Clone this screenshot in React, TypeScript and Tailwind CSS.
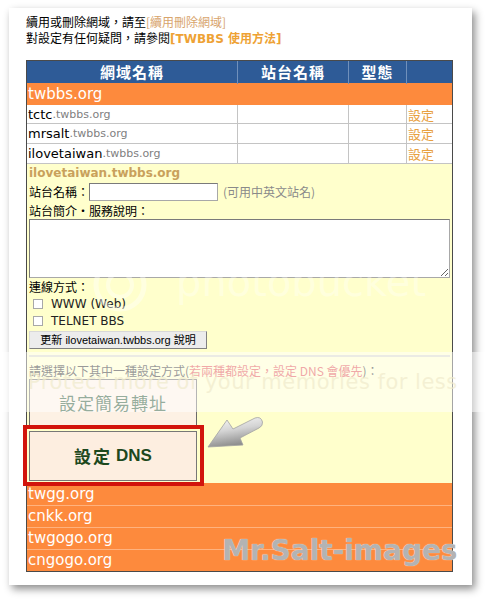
import React from "react";

const cols = "grid grid-cols-[210px_111px_58px_46px]";

const subs = ["tctc", "mrsalt", "ilovetaiwan"];
const others = ["twgg.org", "cnkk.org", "twgogo.org", "cngogo.org"];

function Arrow() {
  return (
    <svg
      className="absolute left-[200px] top-[410px] z-20"
      width="70"
      height="45"
      viewBox="0 0 70 45"
    >
      <defs>
        <linearGradient id="ag" x1="0" y1="0" x2="0.3" y2="1">
          <stop offset="0" stopColor="#fcfcfc" />
          <stop offset="0.5" stopColor="#d4d4d4" />
          <stop offset="1" stopColor="#8c8c8c" />
        </linearGradient>
      </defs>
      <path
        d="M8 37 L27 10 L33 19 L55 8 Q61 6 62.5 12 Q63 16 59 18 L40 28 L43 35 Z"
        fill="url(#ag)"
        stroke="#a2a2a2"
        strokeWidth="0.8"
      />
    </svg>
  );
}

function Check({ label }: { label: string }) {
  return (
    <div className="h-[17px] flex items-center">
      <span className="ml-[4px] mr-[8px] w-[10px] h-[10px] border border-[#a8a8a8] bg-white" />
      <span className="text-[12px] text-[#222] font-['DejaVu_Sans',sans-serif]">{label}</span>
    </div>
  );
}

export default function App() {
  return (
    <div className="relative w-[487px] h-[600px] overflow-hidden bg-white pl-[9px] pt-[8px] font-['DejaVu_Sans','Noto_Sans_CJK_TC',sans-serif]">
      <div className="w-[463px] h-[577px] bg-white shadow-[3px_4px_8px_rgba(0,0,0,0.45)] pl-[17px] pt-[6px]">
        <div className="text-[12px] leading-[16px] text-black font-['Noto_Sans_CJK_TC',sans-serif]">
          <p>
            續用或刪除網域，請至<span className="text-[#d8a46c]">[續用刪除網域]</span>
          </p>
          <p>
            對設定有任何疑問，請參閱
            <span className="font-bold text-[#eea235] font-['DejaVu_Sans','Noto_Sans_CJK_TC',sans-serif]">
              [TWBBS 使用方法]
            </span>
          </p>
        </div>

        <div className="mt-[13px] w-[427px] border border-[#4a4a4a]">
          <div className={`${cols} h-[22px] bg-[#2e5b97] text-white font-bold text-[15px] tracking-[1px] font-['Noto_Sans_CJK_TC',sans-serif]`}>
            <div className="flex items-center justify-center">網域名稱</div>
            <div className="flex items-center justify-center border-l border-[#7090bb]">站台名稱</div>
            <div className="flex items-center justify-center border-l border-[#7090bb]">型態</div>
            <div className="border-l border-[#7090bb]" />
          </div>

          <div className="h-[22px] bg-[#fd8a3d] text-white text-[15px] flex items-center pl-[1px]">
            twbbs.org
          </div>

          {subs.map((s, i) => (
            <div
              key={s}
              className={`${cols} ${i === 0 ? "h-[19px]" : "h-[20px]"} bg-white border-b border-[#c4c4c4]`}
            >
              <div className="flex items-center pl-[1px]">
                <span className="text-[13px] text-black">{s}</span>
                <span className="text-[11px] text-[#808080]">.twbbs.org</span>
              </div>
              <div className="border-l border-[#c4c4c4]" />
              <div className="border-l border-[#c4c4c4]" />
              <div className="border-l border-[#c4c4c4] flex items-center pl-[1px] text-[13px] text-[#e8a040] font-['Noto_Sans_CJK_TC',sans-serif]">
                設定
              </div>
            </div>
          ))}

          <div className="bg-[#ffffcc] px-[2px] pb-[2px] text-[12px] text-black">
            <div className="h-[18px] leading-[18px] font-bold text-[12px] text-[#c9a15c]">
              ilovetaiwan.twbbs.org
            </div>
            <div className="h-[19px] flex items-end font-['Noto_Sans_CJK_TC',sans-serif]">
              <span className="leading-[18px]">站台名稱：</span>
              <input className="w-[129px] h-[18px] border border-[#a8a8a8] border-t-[#7a7a7a] border-l-[#7a7a7a] bg-white" />
              <span className="ml-[5px] leading-[18px] text-[#8a8a8a]">(可用中英文站名)</span>
            </div>
            <div className="mt-[2px] leading-[16px] font-['Noto_Sans_CJK_TC',sans-serif]">
              站台簡介‧服務說明：
            </div>
            <textarea className="block w-[421px] h-[59px] border border-[#a8a8a8] border-t-[#7a7a7a] border-l-[#7a7a7a] bg-white" />
            <div className="mt-[1px] leading-[16px] font-['Noto_Sans_CJK_TC',sans-serif]">連線方式：</div>
            <Check label="WWW (Web)" />
            <Check label="TELNET BBS" />
            <div className="mt-[2px] w-[178px] h-[18px] bg-[#ececec] border border-[#d8d8d8] border-r-[#808080] border-b-[#808080] flex items-center justify-center text-[11px] text-black font-['Liberation_Sans','Noto_Sans_CJK_TC',sans-serif]">
              更新 ilovetaiwan.twbbs.org 說明
            </div>
            <div className="mt-[6px] h-[2px] bg-[#d6d6c8]" />
            <div className="mt-[6px] leading-[16px] text-[#333] font-['Noto_Sans_CJK_TC',sans-serif]">
              請選擇以下其中一種設定方式(
              <span className="text-[#e05050]">若兩種都設定，設定 DNS 會優先</span>)：
            </div>
            <div className="w-[168px] h-[48px] bg-[#fdf1e4] border border-[#6a6a6a] flex items-center justify-center text-[17px] tracking-[1px] text-[#2d5a3a] font-['Noto_Sans_CJK_TC',sans-serif]">
              設定簡易轉址
            </div>
            <div className="relative mt-[4px] w-[168px] h-[50px] bg-[#fdeee0] border border-[#777] flex items-center justify-center text-[17px] font-bold text-[#1d481d] font-['Liberation_Sans','Noto_Sans_CJK_TC',sans-serif]">
              <span className="font-['Noto_Sans_CJK_TC',sans-serif] tracking-[2px] mr-[4px]">設定</span>
              DNS
              <div className="absolute z-10 -left-[7px] -right-[8px] -top-[7px] -bottom-[6px] border-[4px] border-[#d2140c]" />
            </div>
          </div>

          {others.map((o, i) => (
            <div
              key={o}
              className={`h-[22px] bg-[#fd8a3d] text-white text-[15px] flex items-center pl-[1px] ${i > 0 ? "border-t border-[#ffb27e]" : ""}`}
            >
              {o}
            </div>
          ))}
        </div>
      </div>

      {/* photobucket watermark */}
      <svg className="absolute left-[85px] top-[255px]" width="70" height="60" viewBox="0 0 70 60">
        <circle cx="35" cy="30" r="24" fill="none" stroke="#ffffff" strokeOpacity="0.4" strokeWidth="5" />
        <circle cx="35" cy="30" r="12" fill="none" stroke="#ffffff" strokeOpacity="0.4" strokeWidth="4" />
      </svg>
      <div className="absolute left-[176px] top-[262px] text-[40px] leading-none text-white/35 font-['DejaVu_Sans',sans-serif]">
        photobucket
      </div>

      {/* banner */}
      <div className="absolute left-0 top-[352px] w-[487px] h-[60px] bg-white/50 z-10">
        <div className="absolute left-[28px] top-[20px] whitespace-nowrap text-[21px] leading-none tracking-[0.5px] text-[#efeacb]/70 font-['DejaVu_Sans',sans-serif]">
          Protect more of your memories for less
        </div>
      </div>

      <Arrow />

      <div className="absolute left-[222px] top-[537px] z-20 text-[28px] leading-none font-bold text-[#b3b3b3] [text-shadow:0_0_1px_#ffffff] font-['DejaVu_Sans',sans-serif]">
        Mr.Salt-images
      </div>
    </div>
  );
}
